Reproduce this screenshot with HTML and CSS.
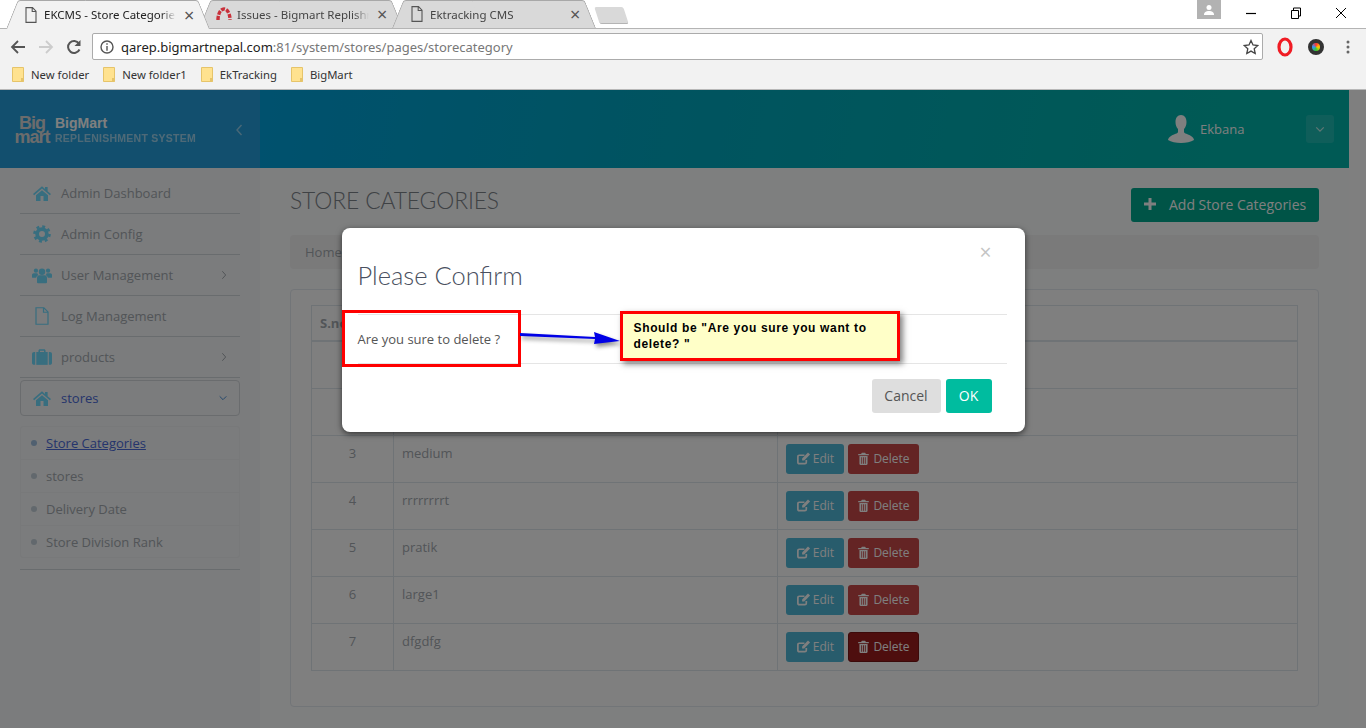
FILE: index.html
```html
<!DOCTYPE html>
<html lang="en">

	<head>
		<meta charset="UTF-8">
		<title>EKCMS - Store Categories</title>
		<link rel="stylesheet" href="styles.css">
	</head>

	<body>
		<svg class="defs" width="0" height="0">
			<symbol id="i-home" viewBox="0 0 24 24"><path d="M12 3L0 13.2l1.5 1.8L12 6l10.500 9 1.500-1.800L19.500 9.700V4h-3.500v2.700z"/><path d="M4 15v7.500h6V16h4v6.500h6V15l-8-6.800z"/></symbol>
			<symbol id="i-cog" viewBox="0 0 24 24"><circle cx="12" cy="12" r="6.500" fill="none" stroke="currentColor" stroke-width="5"/><circle cx="12" cy="12" r="10" fill="none" stroke="currentColor" stroke-width="3.500" stroke-dasharray="3.900 3.950"/></symbol>
			<symbol id="i-users" viewBox="0 0 28 24"><circle cx="14" cy="7.500" r="4.500"/><circle cx="5.500" cy="6" r="3"/><circle cx="22.500" cy="6" r="3"/><path d="M7 22v-6c0-2 1.500-3.500 3.500-3.500h7c2 0 3.500 1.500 3.500 3.500v6c0 1-1 1.500-2 1.500H9c-1 0-2-.5-2-1.500z"/><path d="M0 15v-3c0-1.500 1-2.500 2.500-2.500h5c.3 1.200 1 2.200 1.800 3-2 .5-3.300 1.800-3.500 3.500H1.500C.5 16 0 15.800 0 15z"/><path d="M28 15v-3c0-1.500-1-2.500-2.500-2.500h-5c-.3 1.200-1 2.200-1.800 3 2 .5 3.300 1.800 3.500 3.500h4.300c1 0 1.500-.2 1.500-1z"/></symbol>
			<symbol id="i-file" viewBox="0 0 20 24"><path d="M2 1h10.500L18 6.500V23H2z M12 1v6h6" fill="none" stroke="currentColor" stroke-width="1.600"/></symbol>
			<symbol id="i-case" viewBox="0 0 28 24"><path d="M9 5V3c0-1 1-2 2-2h6c1 0 2 1 2 2v2h-2.200V3.200h-5.600V5z"/><rect x="6" y="5" width="16" height="18"/><path d="M4.500 5v18H3c-1.800 0-3-1.200-3-3V8c0-1.800 1.200-3 3-3z"/><path d="M23.500 5v18H25c1.800 0 3-1.200 3-3V8c0-1.800-1.200-3-3-3z"/></symbol>
			<symbol id="i-edit" viewBox="0 0 16 16"><path d="M11 9.500V12c0 1-.7 1.500-1.500 1.500H3.500C2.500 13.500 2 13 2 12V6c0-1 .5-1.500 1.500-1.500H9" fill="none" stroke="currentColor" stroke-width="1.800"/><path d="M6.500 8L12.800 1.500l2.200 2.200L8.700 10.200H6.500z"/></symbol>
			<symbol id="i-trash" viewBox="0 0 14 16"><path d="M5 1h4l1 1.500h3.500V4H.5V2.500H4z"/><path d="M2 5h10v9.500c0 .8-.5 1.500-1.200 1.500H3.200C2.500 16 2 15.300 2 14.500zM4.300 6.500v8h1v-8zM6.500 6.500v8h1v-8zM8.700 6.500v8h1v-8z" fill-rule="evenodd"/></symbol>
			<symbol id="i-doc" viewBox="0 0 12 16"><path d="M1 .6h6.500L11 4.200v11.200H1z M7.200 .6v3.900H11" fill="none" stroke="currentColor" stroke-width="1.100"/></symbol>
			<symbol id="i-folder" viewBox="0 0 12 15"><path d="M.5 .5h11v14H.5z" fill="#ffe28f" stroke="#e6c46a"/><path d="M9 11h3v3.500H9z" fill="#e6c46a"/></symbol>
		</svg>

		<div class="browser">
			<div class="tabstrip">
				<div class="tab tab-active">
					<svg class="tab-icon"><use href="#i-doc"/></svg>
					<span class="tab-title">EKCMS - Store Categorie</span>
					<span class="tab-close">×</span>
				</div>
				<div class="tab">
					<svg class="tab-icon tab-icon-arc" viewBox="0 0 16 14"><path d="M2 13C2 6 5 2 8 2s6 4 6 11" fill="none" stroke="#c9303a" stroke-width="3.400" stroke-dasharray="4 1.300"/></svg>
					<span class="tab-title">Issues - Bigmart Replishn</span>
					<span class="tab-close">×</span>
				</div>
				<div class="tab">
					<svg class="tab-icon"><use href="#i-doc"/></svg>
					<span class="tab-title">Ektracking CMS</span>
					<span class="tab-close">×</span>
				</div>
				<div class="newtab"></div>
				<div class="winbtns">
					<div class="profile"><svg width="12" height="12" viewBox="0 0 12 12"><circle cx="6" cy="3.500" r="2.500" fill="#fff"/><path d="M1 11c0-3 2-4 5-4s5 1 5 4z" fill="#fff"/></svg></div>
					<svg class="winbtn" viewBox="0 0 12 12"><path d="M1 6.500h10" stroke="#000" stroke-width="1.200"/></svg>
					<svg class="winbtn" viewBox="0 0 12 12"><path d="M1.500 3.500h7v8h-7z M3.500 3.500v-2.500h7v8h-2" fill="none" stroke="#000"/></svg>
					<svg class="winbtn" viewBox="0 0 12 12"><path d="M1 1l10 10M11 1L1 11" stroke="#000"/></svg>
				</div>
			</div>

			<div class="toolbar">
				<svg class="nav" viewBox="0 0 16 16"><path d="M15 8H2M8 2L2 8l6 6" fill="none" stroke="#555" stroke-width="1.800"/></svg>
				<svg class="nav" viewBox="0 0 16 16"><path d="M1 8h13M8 2l6 6-6 6" fill="none" stroke="#ccc" stroke-width="1.800"/></svg>
				<svg class="nav" viewBox="0 0 16 16"><path d="M13.500 10.500A6 6 0 1 1 13 4.500" fill="none" stroke="#555" stroke-width="2"/><path d="M14.500 1v6h-6z" fill="#555"/></svg>
				<div class="omnibox">
					<svg class="info" viewBox="0 0 14 14"><circle cx="7" cy="7" r="6" fill="none" stroke="#555" stroke-width="1.400"/><path d="M6.300 3.200h1.400v1.500H6.300zM6.300 6h1.400v4.800H6.300z" fill="#555"/></svg>
					<span class="url"><b>qarep.bigmartnepal.com</b>:81/system/stores/pages/storecategory</span>
					<svg class="star" viewBox="0 0 16 16"><path d="M8 1.500l2 4.500 4.800.5-3.600 3.200 1 4.800L8 12.100l-4.200 2.400 1-4.800L1.200 6.500 6 6z" fill="none" stroke="#444" stroke-width="1.300"/></svg>
				</div>
				<svg class="ext" viewBox="0 0 18 20"><ellipse cx="9" cy="10" rx="6" ry="8" fill="none" stroke="#f01c24" stroke-width="3.200"/></svg>
				<div class="ext-cam"></div>
				<svg class="ext ext-menu" viewBox="0 0 16 16"><circle cx="8" cy="3" r="1.500" fill="#666"/><circle cx="8" cy="8" r="1.500" fill="#666"/><circle cx="8" cy="13" r="1.500" fill="#666"/></svg>
			</div>

			<div class="bookmarks">
				<span class="mark"><svg><use href="#i-folder"/></svg>New folder</span>
				<span class="mark"><svg><use href="#i-folder"/></svg>New folder1</span>
				<span class="mark"><svg><use href="#i-folder"/></svg>EkTracking</span>
				<span class="mark"><svg><use href="#i-folder"/></svg>BigMart</span>
			</div>
		</div>

		<div class="page">
			<div class="wrap">
				<div class="topbar">
					<div class="brand">
						<div class="logo"><span class="logo-big">Big</span><span class="logo-mart">mart</span></div>
						<div class="brand-text">
							<div class="brand-name">BigMart</div>
							<div class="brand-sub">REPLENISHMENT SYSTEM</div>
						</div>
						<svg class="collapse" viewBox="0 0 8 12"><path d="M6.500 1L2 6l4.500 5" fill="none" stroke="#fff" stroke-width="1.400"/></svg>
					</div>
					<div class="user">
						<svg class="avatar" viewBox="0 0 26 28"><path d="M13 0c3.500 0 5.500 3 5.500 7 0 3-1 5.500-2.500 7v3c0 1.500 4 2 7 4 2 1.300 3 3 3 4-3 2-8 3-13 3S3 27 0 25c0-1 1-2.700 3-4 3-2 7-2.500 7-4v-3C8.500 12.500 7.500 10 7.500 7c0-4 2-7 5.500-7z" fill="#fff"/></svg>
						<span class="user-name">Ekbana</span>
						<div class="user-btn"><svg viewBox="0 0 12 8"><path d="M1.500 1.500L6 6l4.500-4.500" fill="none" stroke="#fff" stroke-width="1.500"/></svg></div>
					</div>
				</div>

				<div class="body">
					<div class="sidebar">
						<div class="nav-item"><svg class="nav-icon"><use href="#i-home"/></svg>Admin Dashboard</div>
						<div class="nav-item"><svg class="nav-icon"><use href="#i-cog"/></svg>Admin Config</div>
						<div class="nav-item"><svg class="nav-icon"><use href="#i-users"/></svg>User Management<svg class="nav-arrow" viewBox="0 0 8 12"><path d="M2 1.500L6 6l-4 4.500" fill="none" stroke="currentColor" stroke-width="1.200"/></svg></div>
						<div class="nav-item"><svg class="nav-icon"><use href="#i-file"/></svg>Log Management</div>
						<div class="nav-item"><svg class="nav-icon"><use href="#i-case"/></svg>products<svg class="nav-arrow" viewBox="0 0 8 12"><path d="M2 1.500L6 6l-4 4.500" fill="none" stroke="currentColor" stroke-width="1.200"/></svg></div>
						<div class="nav-item nav-open"><svg class="nav-icon"><use href="#i-home"/></svg>stores<svg class="nav-arrow" viewBox="0 0 12 8"><path d="M2 2l4 4 4-4" fill="none" stroke="currentColor" stroke-width="1.200"/></svg></div>
						<div class="subnav">
							<div class="sub-item sub-active"><i></i><span>Store Categories</span></div>
							<div class="sub-item"><i></i><span>stores</span></div>
							<div class="sub-item"><i></i><span>Delivery Date</span></div>
							<div class="sub-item"><i></i><span>Store Division Rank</span></div>
						</div>
					</div>

					<div class="main">
						<div class="main-head">
							<h1>STORE CATEGORIES</h1>
							<div class="btn-add"><svg viewBox="0 0 12 12"><path d="M4.500 0h3v4.500H12v3H7.500V12h-3V7.500H0v-3h4.500z" fill="#fff"/></svg>Add Store Categories</div>
						</div>
						<div class="crumb">Home</div>
						<div class="panel">
							<table class="grid">
								<colgroup><col class="c1"><col class="c2"><col></colgroup>
								<tr><th>S.no</th><th></th><th></th></tr>
								<tr><td class="num">1</td><td></td><td></td></tr>
								<tr><td class="num">2</td><td></td><td></td></tr>
								<tr>
									<td class="num">3</td><td>medium</td>
									<td class="acts"><span class="btn btn-edit"><svg><use href="#i-edit"/></svg>Edit</span><span class="btn btn-del"><svg><use href="#i-trash"/></svg>Delete</span></td>
								</tr>
								<tr>
									<td class="num">4</td><td>rrrrrrrrt</td>
									<td class="acts"><span class="btn btn-edit"><svg><use href="#i-edit"/></svg>Edit</span><span class="btn btn-del"><svg><use href="#i-trash"/></svg>Delete</span></td>
								</tr>
								<tr>
									<td class="num">5</td><td>pratik</td>
									<td class="acts"><span class="btn btn-edit"><svg><use href="#i-edit"/></svg>Edit</span><span class="btn btn-del"><svg><use href="#i-trash"/></svg>Delete</span></td>
								</tr>
								<tr>
									<td class="num">6</td><td>large1</td>
									<td class="acts"><span class="btn btn-edit"><svg><use href="#i-edit"/></svg>Edit</span><span class="btn btn-del"><svg><use href="#i-trash"/></svg>Delete</span></td>
								</tr>
								<tr>
									<td class="num">7</td><td>dfgdfg</td>
									<td class="acts"><span class="btn btn-edit"><svg><use href="#i-edit"/></svg>Edit</span><span class="btn btn-del btn-hover"><svg><use href="#i-trash"/></svg>Delete</span></td>
								</tr>
							</table>
						</div>
					</div>
				</div>
			</div>

			<!-- 弹窗遮罩 -->
			<div class="overlay">
				<div class="modal">
					<div class="modal-head">
						<span class="modal-x">×</span>
						<h2>Please Confirm</h2>
					</div>
					<div class="modal-body">Are you sure to delete ?</div>
					<div class="modal-foot">
						<span class="mbtn mbtn-cancel">Cancel</span>
						<span class="mbtn mbtn-ok">OK</span>
					</div>

					<div class="note-box"></div>
					<svg class="note-arrow" width="104" height="20" viewBox="0 0 104 20"><path d="M2 3L77 7 76 2 102 11 76 14 77 9 2 6z" fill="#0000e6"/></svg>
					<div class="note">Should be "Are you sure you want to delete? "</div>
				</div>
			</div>
		</div>
	</body>

</html>
```

FILE: styles.css
```css
* {
	margin: 0;
	padding: 0;
	box-sizing: border-box;
}

body {
	width: 1366px;
	height: 728px;
	overflow: hidden;
	background: #fff;
	font-family: "Open Sans", "Noto Sans", sans-serif;
	font-size: 13px;
}

.defs {
	position: absolute;
}

/* browser chrome */
.browser {
	height: 90px;
	font-family: "Noto Sans", "Open Sans", sans-serif;
	color: #333;
}

.tabstrip {
	height: 29px;
	display: flex;
	padding-left: 6px;
	background: #fff;
	border-bottom: 1px solid #b4b4b4;
}

.tab {
	position: relative;
	width: 204px;
	height: 28px;
	margin-right: -11px;
	padding: 0 0 0 19px;
	display: flex;
	align-items: center;
	font-size: 11.5px;
	color: #444;
	z-index: 1;
}

.tab::before,
.tab::after {
	content: "";
	position: absolute;
	top: 0;
	bottom: 0;
	width: 55%;
	background: #d9d9d9;
	border-top: 1px solid #a8a8a8;
	z-index: -1;
}

.tab::before {
	left: 0;
	border-left: 1px solid #a8a8a8;
	border-radius: 3px 0 0 0;
	transform: skewX(-22deg);
	transform-origin: bottom left;
}

.tab::after {
	right: 0;
	border-right: 1px solid #a8a8a8;
	border-radius: 0 3px 0 0;
	transform: skewX(22deg);
	transform-origin: bottom right;
}

.tab-active {
	z-index: 3;
	height: 29px;
	color: #222;
}

.tab-active::before,
.tab-active::after {
	background: #f2f2f2;
}

.tab-icon {
	width: 12px;
	height: 16px;
	flex: none;
	margin-right: 7px;
	color: #555;
}

.tab-icon-arc {
	width: 16px;
	height: 14px;
	margin: 0 5px 0 -2px;
}

.tab-title {
	width: 136px;
	white-space: nowrap;
	overflow: hidden;
	-webkit-mask-image: linear-gradient(to right, #000 86%, transparent 97%);
	mask-image: linear-gradient(to right, #000 86%, transparent 97%);
}

.tab-close {
	margin-left: 4px;
	font-size: 18px;
	line-height: 1;
	color: #555;
}

.newtab {
	width: 29px;
	height: 17px;
	margin: 7px 0 0 12px;
	background: #d9d9d9;
	border-bottom: 1px solid #b4b4b4;
	transform: skewX(18deg);
	border-radius: 2px;
}

.winbtns {
	margin-left: auto;
	display: flex;
	align-items: flex-start;
}

.profile {
	width: 24px;
	height: 19px;
	background: #b2b2b2;
	display: flex;
	align-items: center;
	justify-content: center;
}

.winbtn {
	width: 12px;
	height: 12px;
	margin: 7px 0 0 33px;
}

.profile + .winbtn {
	margin-left: 24px;
}

.winbtn:last-child {
	margin-right: 19px;
}

.toolbar {
	height: 32px;
	padding: 3px 10px 0;
	background: #f2f2f2;
	display: flex;
	align-items: center;
}

.nav {
	width: 16px;
	height: 16px;
	margin-right: 12px;
	flex: none;
}

.omnibox {
	width: 1172px;
	height: 27px;
	margin-left: -2px;
	background: #fff;
	border: 1px solid #ababab;
	border-radius: 2px;
	display: flex;
	align-items: center;
	padding: 0 3px 0 7px;
}

.info {
	width: 14px;
	height: 14px;
	margin-right: 7px;
}

.url {
	font-size: 13px;
	color: #777;
	white-space: nowrap;
}

.url b {
	font-weight: 400;
	color: #222;
}

.star {
	width: 16px;
	height: 16px;
	margin-left: auto;
}

.ext {
	width: 18px;
	height: 20px;
	margin-left: 13px;
	flex: none;
}

.ext-cam {
	width: 16px;
	height: 16px;
	margin-left: 14px;
	border-radius: 50%;
	border: 4px solid #333;
	background: conic-gradient(#f33, #fc0, #3c3, #39f, #f33);
	flex: none;
}

.ext-menu {
	width: 16px;
	margin-left: 16px;
}

.bookmarks {
	height: 29px;
	padding: 0 0 2px 12px;
	background: #f2f2f2;
	border-bottom: 1px solid #b8b8b8;
	display: flex;
	align-items: center;
	font-size: 11.3px;
	color: #333;
}

.mark {
	display: flex;
	align-items: center;
	margin-right: 14px;
}

.mark svg {
	width: 12px;
	height: 15px;
	margin-right: 7px;
}

/* app */
.page {
	position: relative;
	height: 638px;
	overflow: hidden;
}

.wrap {
	width: 1349px;
}

.topbar {
	height: 78px;
	display: flex;
	justify-content: space-between;
	background: linear-gradient(100deg, #00a2dc 20%, #00a8c0 50%, #00b4aa 90%);
}

.brand {
	position: relative;
	width: 260px;
	display: flex;
	align-items: center;
	padding: 2px 0 0 13px;
	color: #fff;
	background: #249fdc;
}

.logo {
	width: 38px;
	font-family: "Liberation Sans", sans-serif;
	font-weight: 700;
	text-align: center;
	color: #d8d8d8;
	letter-spacing: -1px;
}

.logo-big {
	display: block;
	font-size: 18px;
	line-height: 14px;
}

.logo-mart {
	display: block;
	font-size: 18px;
	line-height: 15px;
}

.brand-text {
	margin-left: 4px;
	padding-top: 2px;
	font-family: "Liberation Sans", sans-serif;
	font-weight: 700;
	line-height: 15px;
}

.brand-name {
	font-size: 14px;
}

.brand-sub {
	font-size: 10.5px;
	letter-spacing: .25px;
	opacity: .55;
}

.collapse {
	position: absolute;
	left: 235px;
	top: 34px;
	width: 8px;
	height: 12px;
	opacity: .5;
}

.user {
	display: flex;
	align-items: center;
	padding-right: 15px;
	color: #fff;
}

.avatar {
	width: 26px;
	height: 28px;
}

.user-name {
	width: 106px;
	margin-left: 6px;
	font-size: 13px;
}

.user-btn {
	width: 28px;
	height: 28px;
	border-radius: 3px;
	background: rgba(255, 255, 255, .12);
	display: flex;
	align-items: center;
	justify-content: center;
}

.user-btn svg {
	width: 10px;
	height: 7px;
	opacity: .7;
}

.body {
	display: flex;
	height: 560px;
	background: #f9fafc;
}

.sidebar {
	width: 260px;
	padding: 5px 20px 0;
	background: #f6f8fa;
}

.nav-item {
	display: flex;
	align-items: center;
	height: 41px;
	border-bottom: 1px solid #d2d8dd;
	padding: 0 12px;
	color: #a4aab0;
}

.nav-icon {
	width: 20px;
	height: 18px;
	margin-right: 9px;
	fill: #70dcff;
	color: #70dcff;
	flex: none;
}

.nav-arrow {
	width: 8px;
	height: 10px;
	margin-left: auto;
	color: #a4aab0;
}

.nav-open {
	height: 36px;
	margin: 2px 0 10px;
	padding: 0 11px;
	border: 1px solid #d4d8dc;
	border-radius: 4px;
	color: #4a6ad8;
}

.nav-open .nav-arrow {
	color: #4a90d8;
	width: 10px;
}

.subnav {
	height: 132px;
	border: 1px solid #f0f2f4;
	border-radius: 3px;
	margin-bottom: 11px;
}

.sidebar::after {
	content: "";
	display: block;
	border-top: 1px solid #d2d8dd;
}

.sub-item {
	height: 33px;
	display: flex;
	align-items: center;
	padding-left: 10px;
	border-bottom: 1px solid #f0f2f4;
	color: #a4aab0;
}

.sub-item:last-child {
	height: 32px;
	border-bottom: 0;
}

.sub-item i {
	width: 6px;
	height: 6px;
	border-radius: 50%;
	background: #c4d0da;
	margin-right: 9px;
}

.sub-active {
	color: #4a6ad8;
}

.sub-active span {
	text-decoration: underline;
}

.sub-active i {
	background: #a0c0e0;
}

.main {
	flex: 1;
	padding: 20px 30px 0;
	background: #fdfeff;
}

.main-head {
	display: flex;
	justify-content: space-between;
	height: 47px;
}

.main-head h1 {
	font-family: "Lato", sans-serif;
	font-weight: 300;
	font-size: 22.8px;
	line-height: 24px;
	letter-spacing: -.1px;
	color: #7e848a;
}

.btn-add {
	width: 188px;
	height: 34px;
	padding: 0 0 2px 13px;
	border-radius: 3px;
	background: #00a88e;
	color: #fff;
	font-size: 14px;
	display: flex;
	align-items: center;
	white-space: nowrap;
}

.btn-add svg {
	width: 12px;
	height: 12px;
	margin-right: 13px;
}

.crumb {
	height: 34px;
	line-height: 34px;
	padding-left: 15px;
	background: #f5f5f5;
	border-radius: 4px;
	color: #a4aab0;
}

.panel {
	margin-top: 20px;
	height: 418px;
	padding: 15px 20px;
	background: #fff;
	border: 1px solid #e4eaf0;
	border-radius: 4px;
}

.grid {
	width: 987px;
	border-collapse: collapse;
	table-layout: fixed;
	color: #a4aab0;
}

.c1 {
	width: 82px;
}

.c2 {
	width: 384px;
}

.grid th,
.grid td {
	border: 1px solid #dfe6ec;
	padding: 8px;
	text-align: left;
	vertical-align: top;
	line-height: 19px;
}

.grid th {
	height: 35px;
	padding-bottom: 7px;
	font-weight: 700;
	border-bottom: 2px solid #dfe6ec;
}

.grid td {
	height: 47px;
}

.grid .num {
	text-align: center;
}

.grid .acts {
	padding: 8px 8px 0;
}

.btn {
	display: inline-flex;
	align-items: center;
	height: 30px;
	border-radius: 3px;
	color: #fff;
	font-size: 12px;
	vertical-align: top;
	justify-content: center;
}

.btn svg {
	width: 13px;
	height: 13px;
	margin-right: 3px;
	fill: currentColor;
	color: currentColor;
}

.btn-edit {
	width: 58px;
	background: #50b8d8;
	margin-right: 4px;
}

.btn-edit svg {
	width: 15px;
	height: 15px;
	margin-right: 2px;
}

.btn-del {
	width: 71px;
	background: #c84848;
}

.btn-hover {
	background: #9c1c1c;
	border: 1px solid #781414;
}

/* modal */
.overlay {
	position: absolute;
	inset: 0;
	background: rgba(0, 0, 0, .5);
	display: flex;
	justify-content: center;
	align-items: flex-start;
	padding-top: 138px;
}

.modal {
	position: relative;
	width: 683px;
	height: 204px;
	background: #fff;
	border-radius: 8px;
	box-shadow: 0 2px 6px rgba(0, 0, 0, .6);
	padding: 0 18px 0 16px;
	color: #676a6c;
}

.modal-head {
	height: 87px;
	border-bottom: 1px solid #e5e5e5;
	position: relative;
}

.modal-head h2 {
	position: absolute;
	left: 0;
	top: 31px;
	font-family: "Lato", sans-serif;
	font-weight: 300;
	font-size: 25.5px;
	line-height: 32px;
	color: #4a5060;
}

.modal-x {
	position: absolute;
	right: 15px;
	top: 11px;
	font-size: 21px;
	line-height: 26px;
	color: #c4c4c4;
}

.modal-body {
	height: 49px;
	border-bottom: 1px solid #e5e5e5;
	line-height: 49px;
	font-size: 13px;
	color: #555;
}

.modal-foot {
	display: flex;
	justify-content: flex-end;
	gap: 5px;
	padding: 15px 15px 0 0;
}

.mbtn {
	height: 34px;
	line-height: 34px;
	text-align: center;
	border-radius: 3px;
	font-size: 14px;
}

.mbtn-cancel {
	width: 69px;
	background: #dedede;
	color: #555;
}

.mbtn-ok {
	width: 46px;
	background: #00bc9f;
	color: #fff;
}

/* annotations */
.note-box {
	position: absolute;
	left: 0;
	top: 82px;
	width: 179px;
	height: 57px;
	border: 3px solid #f00;
}

.note-arrow {
	position: absolute;
	left: 176px;
	top: 102px;
	filter: drop-shadow(2px 3px 2px rgba(0, 0, 0, .45));
}

.note {
	position: absolute;
	left: 278px;
	top: 83px;
	width: 280px;
	height: 50px;
	padding: 6px 10px 6px 11px;
	background: #ffffc8;
	border: 3px solid #f00;
	box-shadow: 3px 3px 6px rgba(0, 0, 0, .5);
	font-family: "Liberation Sans", sans-serif;
	font-weight: 700;
	font-size: 12px;
	line-height: 16px;
	letter-spacing: .65px;
	color: #000;
}
```
